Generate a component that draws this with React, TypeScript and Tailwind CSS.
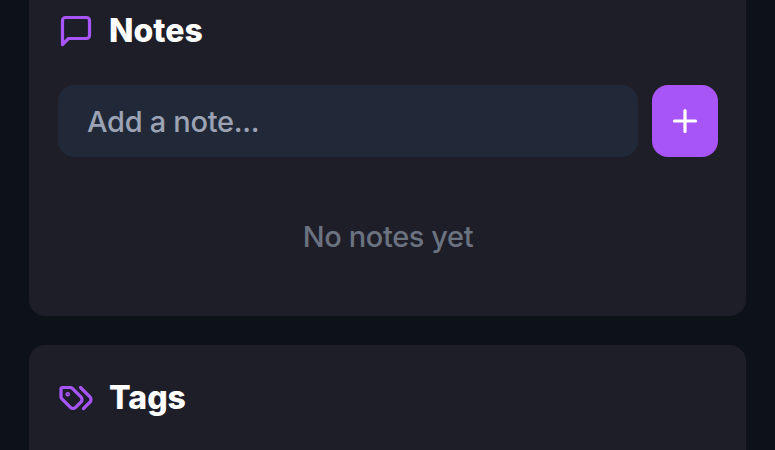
import { Plus } from "lucide-react";
import type { ReactNode } from "react";

interface SectionTitleProps {
  icon: ReactNode;
  children: ReactNode;
}

const SectionIcon = ({ children }: { children: ReactNode }) => {
  return (
    <svg
      viewBox="0 0 24 24"
      fill="none"
      stroke="currentColor"
      strokeWidth={2.15}
      strokeLinecap="round"
      strokeLinejoin="round"
      className="size-9 shrink-0 text-[#a855f7]"
    >
      {children}
    </svg>
  );
};

const NotesIcon = () => (
  <SectionIcon>
    <path d="M21 15a2 2 0 0 1-2 2H7l-4 4V5a2 2 0 0 1 2-2h14a2 2 0 0 1 2 2z" />
  </SectionIcon>
);

const TagsIcon = () => (
  <SectionIcon>
    <path d="M9.586 5.586A2 2 0 0 0 8.172 5H3a1 1 0 0 0-1 1v5.172a2 2 0 0 0 .586 1.414L8.29 18.29a2.426 2.426 0 0 0 3.42 0l3.58-3.58a2.426 2.426 0 0 0 0-3.42z" />
    <circle cx="6.5" cy="9.5" r=".5" fill="currentColor" />
    <path d="m15 5 6.3 6.3a2.4 2.4 0 0 1 0 3.4L17 19" />
  </SectionIcon>
);

const SectionTitle = ({ icon, children }: SectionTitleProps) => {
  return (
    <h3 className="flex items-center gap-[15px] text-[32px] leading-[48px] font-extrabold text-white">
      {icon}
      <span>{children}</span>
    </h3>
  );
};

const App = () => {
  return (
    <div className="h-[450px] w-[775px] overflow-hidden bg-[#0d1118] px-[29px] font-['Inter',sans-serif]">
      {/* NOTES */}
      <section className="h-[316px] rounded-b-2xl bg-[#1e1e28] pt-[7px] pr-[28px] pl-[29px]">
        <SectionTitle icon={<NotesIcon />}>Notes</SectionTitle>
        <div className="mt-[30px] flex gap-[14px]">
          <input
            placeholder="Add a note..."
            className="h-[72px] min-w-0 flex-1 rounded-2xl bg-[#212938] px-[29px] text-[29px] font-medium tracking-[-0.3px] text-white outline-none placeholder:text-[#9ca3b4]"
          />
          <button className="flex h-[72px] w-[66px] items-center justify-center rounded-2xl bg-[#a855f7] text-white">
            <Plus className="size-9" strokeWidth={2.15} />
          </button>
        </div>
        <p className="mt-[58px] text-center text-[29px] leading-[44px] font-medium tracking-[-0.4px] text-[#6b7280]">
          No notes yet
        </p>
      </section>

      {/* TAGS */}
      <section className="mt-[29px] h-[130px] rounded-t-2xl bg-[#1e1e28] px-[29px] pt-[29px]">
        <SectionTitle icon={<TagsIcon />}>Tags</SectionTitle>
      </section>
    </div>
  );
};

export default App;
